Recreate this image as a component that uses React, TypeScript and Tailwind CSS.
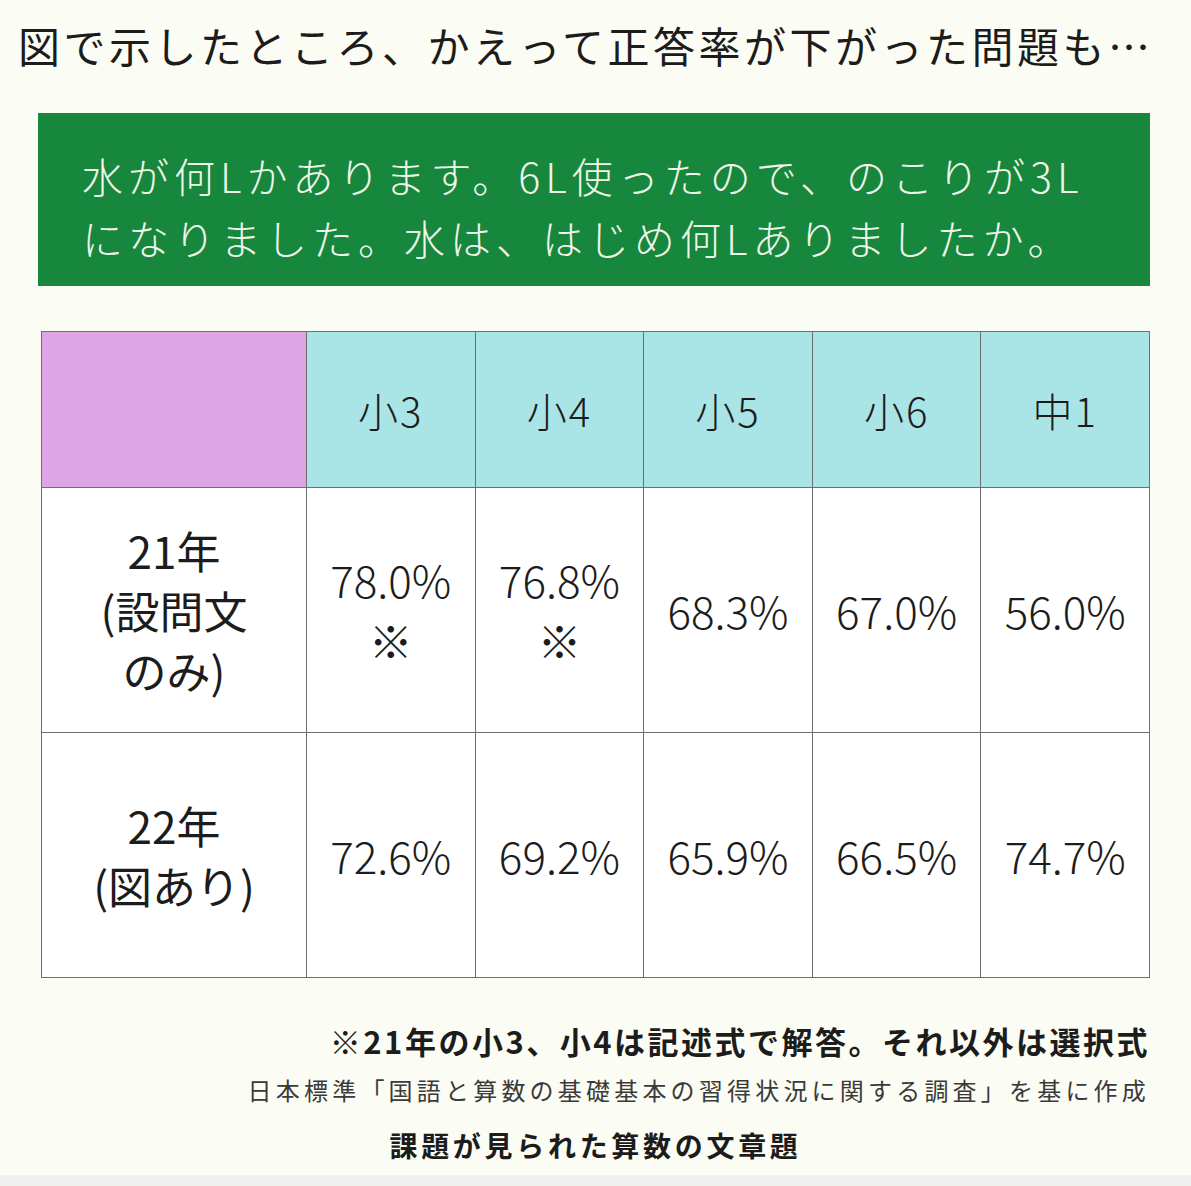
import React from 'react';

const jp = { fontFamily: '"Noto Sans CJK JP", "Noto Sans", sans-serif' };

const grades = ['小3', '小4', '小5', '小6', '中1'];

const rows = [
  {
    label: ['21年', '(設問文', 'のみ)'],
    values: [
      ['78.0%', '※'],
      ['76.8%', '※'],
      ['68.3%'],
      ['67.0%'],
      ['56.0%'],
    ],
  },
  {
    label: ['22年', '(図あり)'],
    values: [['72.6%'], ['69.2%'], ['65.9%'], ['66.5%'], ['74.7%']],
  },
];

const App = () => {
  return (
    <div className="w-[1191px] h-[1186px] bg-[#fbfcf3] flex flex-col text-[#1c1c1c]" style={jp}>
      {/* heading */}
      <h1 className="pl-[18px] pt-[15px] text-[42px] leading-[60px] tracking-[3.5px] font-normal whitespace-nowrap">
        図で示したところ、かえって正答率が下がった問題も…
      </h1>

      {/* question box */}
      <div className="ml-[38px] mr-[41px] mt-[38px] h-[173px] bg-[#16873c] pl-[44px] pt-[31px] text-[#eef6ea] text-[41px] leading-[62px] tracking-[5px] font-light whitespace-nowrap">
        <p>水が何Lかあります。6L使ったので、のこりが3L</p>
        <p>になりました。水は、はじめ何Lありましたか。</p>
      </div>

      {/* results table */}
      <div className="ml-[41px] mt-[45px] w-[1109px] grid grid-cols-[265px_repeat(5,1fr)] grid-rows-[156px_245px_245px] border-l-[1.5px] border-t-[1.5px] border-[#6f6f6f]">
        <div className="bg-[#dda5e6] border-r-[1.5px] border-b-[1.5px] border-[#6f6f6f]" />
        {grades.map((g) => (
          <div
            key={g}
            className="bg-[#a9e4e7] border-r-[1.5px] border-b-[1.5px] border-[#6f6f6f] flex items-center justify-center text-[40px] tracking-[2px] font-light"
          >
            {g}
          </div>
        ))}
        {rows.map((row) => (
          <React.Fragment key={row.label[0]}>
            <div className="bg-white border-r-[1.5px] border-b-[1.5px] border-[#6f6f6f] flex flex-col items-center justify-center text-[44px] leading-[60px]">
              {row.label.map((l) => (
                <span key={l}>{l}</span>
              ))}
            </div>
            {row.values.map((v, i) => (
              <div
                key={i}
                className="bg-white border-r-[1.5px] border-b-[1.5px] border-[#6f6f6f] flex flex-col items-center justify-center text-[44px] leading-[61px] font-light"
              >
                {v.map((t) => (
                  <span key={t}>{t}</span>
                ))}
              </div>
            ))}
          </React.Fragment>
        ))}
      </div>

      {/* notes */}
      <div className="mr-[41px] mt-[41px] flex flex-col items-end">
        <p className="text-[31px] leading-[44px] font-bold tracking-[2.5px] whitespace-nowrap">
          ※21年の小3、小4は記述式で解答。それ以外は選択式
        </p>
        <p className="mt-[10px] text-[24px] leading-[34px] tracking-[4.2px] text-[#3a3a3a] whitespace-nowrap">
          日本標準「国語と算数の基礎基本の習得状況に関する調査」を基に作成
        </p>
      </div>
      <p className="mt-[18px] text-center text-[28px] leading-[40px] font-bold tracking-[3.7px] whitespace-nowrap">
        課題が見られた算数の文章題
      </p>

      <div className="mt-auto h-[11px] bg-[#f0f0ee]" />
    </div>
  );
};

export default App;
